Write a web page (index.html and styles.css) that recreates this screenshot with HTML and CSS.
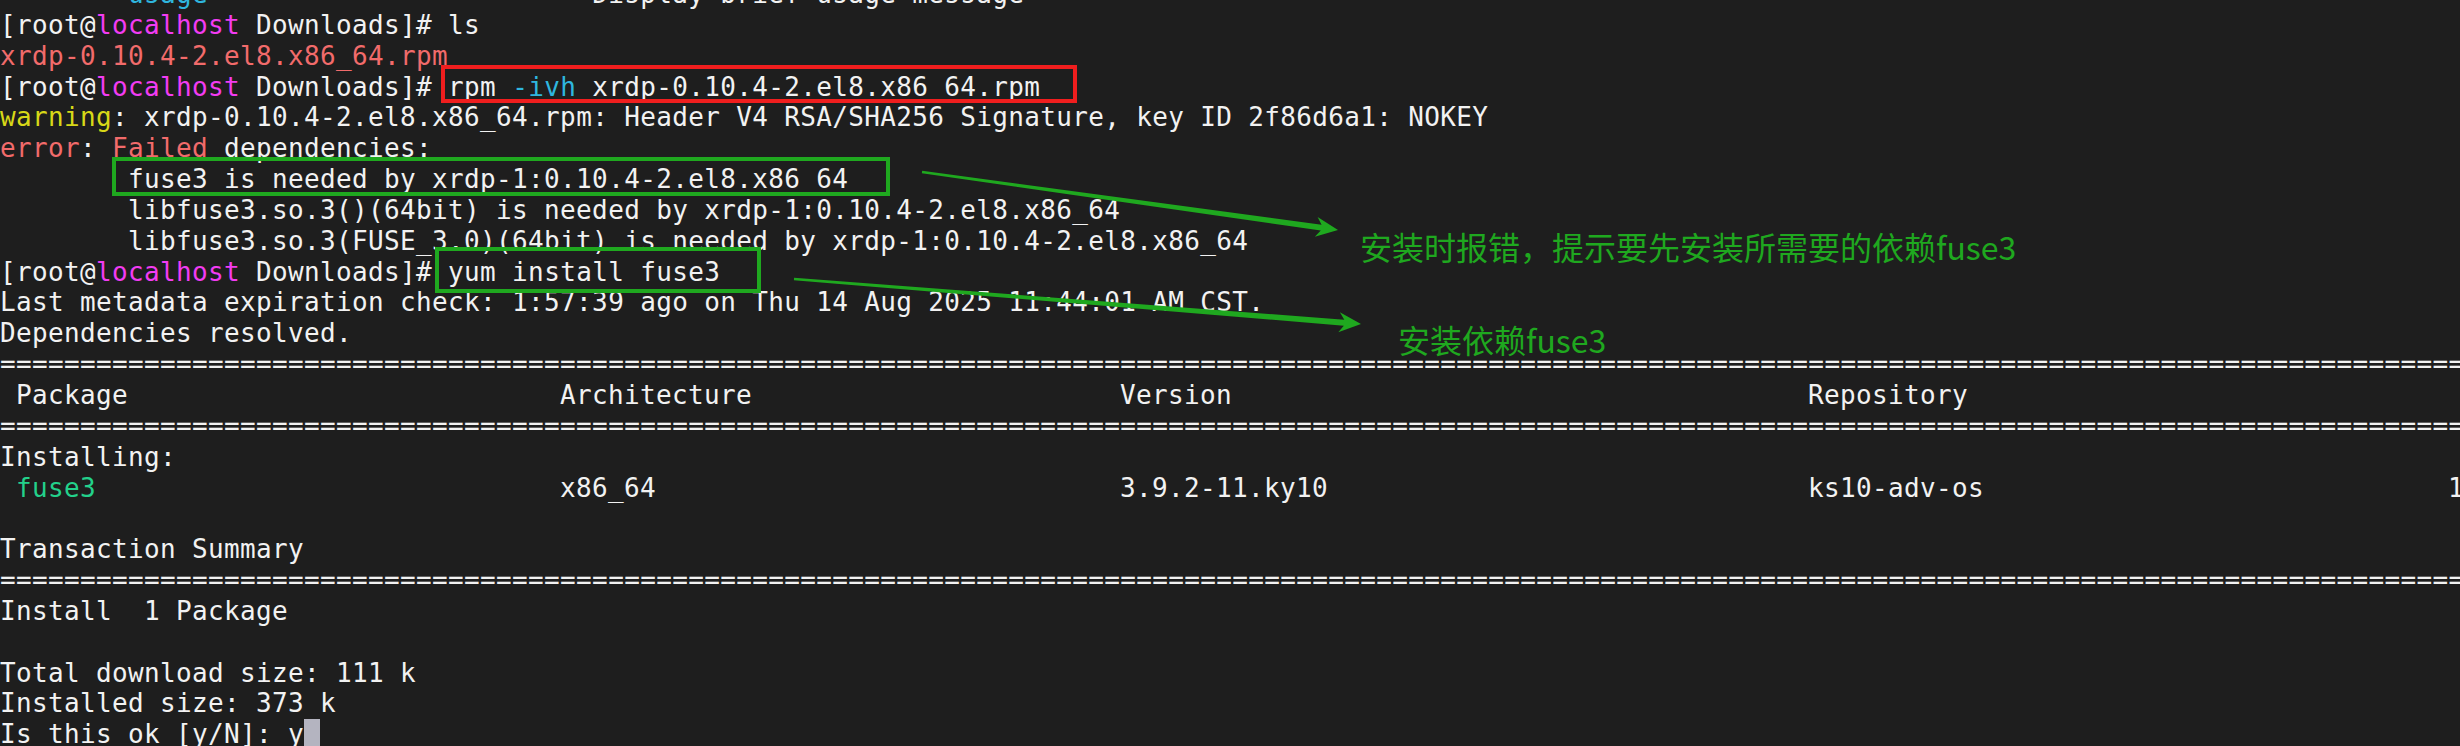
FILE: index.html
```html
<!DOCTYPE html>
<html lang="en">
<head>
<meta charset="utf-8">
<title>Terminal</title>
<link rel="stylesheet" href="styles.css">
</head>
<body>
<div class="screen">
  <div class="term">
    <div class="ln">      <span class="cy">--usage</span>                        Display brief usage message</div>
    <div class="ln">[root@<span class="mg">localhost</span> Downloads]# ls</div>
    <div class="ln"><span class="rd">xrdp-0.10.4-2.el8.x86_64.rpm</span></div>
    <div class="ln">[root@<span class="mg">localhost</span> Downloads]# rpm <span class="cy">-ivh</span> xrdp-0.10.4-2.el8.x86_64.rpm</div>
    <div class="ln"><span class="yl">warning</span>: xrdp-0.10.4-2.el8.x86_64.rpm: Header V4 RSA/SHA256 Signature, key ID 2f86d6a1: NOKEY</div>
    <div class="ln"><span class="rd">error</span>: <span class="rd">Failed</span> dependencies:</div>
    <div class="ln">        fuse3 is needed by xrdp-1:0.10.4-2.el8.x86_64</div>
    <div class="ln">        libfuse3.so.3()(64bit) is needed by xrdp-1:0.10.4-2.el8.x86_64</div>
    <div class="ln">        libfuse3.so.3(FUSE_3.0)(64bit) is needed by xrdp-1:0.10.4-2.el8.x86_64</div>
    <div class="ln">[root@<span class="mg">localhost</span> Downloads]# yum install fuse3</div>
    <div class="ln">Last metadata expiration check: 1:57:39 ago on Thu 14 Aug 2025 11:44:01 AM CST.</div>
    <div class="ln">Dependencies resolved.</div>
    <div class="ln">================================================================================================================================================================</div>
    <div class="ln row"><span> Package</span><span>Architecture</span><span>Version</span><span>Repository</span><span>    Size</span></div>
    <div class="ln">================================================================================================================================================================</div>
    <div class="ln">Installing:</div>
    <div class="ln row"><span> <span class="gn">fuse3</span></span><span>x86_64</span><span>3.9.2-11.ky10</span><span>ks10-adv-os</span><span>111 k</span></div>
    <div class="ln"> </div>
    <div class="ln">Transaction Summary</div>
    <div class="ln">================================================================================================================================================================</div>
    <div class="ln">Install  1 Package</div>
    <div class="ln"> </div>
    <div class="ln">Total download size: 111 k</div>
    <div class="ln">Installed size: 373 k</div>
    <div class="ln">Is this ok [y/N]: y<span class="cursor"></span></div>
  </div>

  <div class="box box-red"></div>
  <div class="box box-g1"></div>
  <div class="box box-g2"></div>

  <svg class="arrows" width="2460" height="746" viewBox="0 0 2460 746" xmlns="http://www.w3.org/2000/svg">
    <polygon points="922.17,170.81 1321.57,224.68 1317.59,217.06 1338,230 1314.83,236.87 1320.75,230.62 921.83,173.19" />
    <polygon points="794.09,277.8 1344.29,319.67 1339.86,312.29 1361,324 1338.28,332.23 1343.81,325.65 793.91,280.2" />
  </svg>

  <div class="note note-1">安装时报错，提示要先安装所需要的依赖fuse3</div>
  <div class="note note-2">安装依赖fuse3</div>
</div>
</body>
</html>
```

FILE: styles.css
```css
html, body {
  margin: 0;
  padding: 0;
  background: #1e1e1e;
}

body {
  width: 2460px;
  height: 746px;
  overflow: hidden;
}

.screen {
  position: relative;
  display: flow-root;
  width: 2460px;
  height: 746px;
  overflow: hidden;
  background: #1e1e1e;
}

.term {
  margin-top: -21px;
  font-family: "DejaVu Sans Mono", monospace;
  font-size: 26px;
  letter-spacing: 0.35px;
  line-height: 30.85px;
  color: #f2f2f2;
}

.ln {
  height: 30.85px;
  white-space: pre;
}

.row {
  display: grid;
  grid-template-columns: 560px 560px 688px 640px max-content;
}

.mg { color: #f23cf2; }
.rd { color: #f26b6b; }
.cy { color: #2fb6de; }
.yl { color: #d8d818; }
.gn { color: #23d18b; }

.cursor {
  display: inline-block;
  width: 16px;
  height: 30.85px;
  vertical-align: top;
  background: #b4b4c0;
}

.box {
  position: absolute;
  box-sizing: border-box;
  border: 4px solid #1fa81f;
}

.box-red {
  left: 441px;
  top: 65px;
  width: 636px;
  height: 38px;
  border-color: #f01e1e;
}

.box-g1 {
  left: 112px;
  top: 157px;
  width: 778px;
  height: 39px;
}

.box-g2 {
  left: 435px;
  top: 247px;
  width: 326px;
  height: 46px;
}

.arrows {
  position: absolute;
  left: 0;
  top: 0;
  fill: #1fa81f;
}

.note {
  position: absolute;
  font-family: "Noto Sans CJK SC", "Noto Sans", sans-serif;
  font-size: 32px;
  line-height: 32px;
  color: #1fa81f;
  white-space: nowrap;
}

.note-1 {
  left: 1360px;
  top: 230px;
}

.note-2 {
  left: 1398px;
  top: 323px;
}
```
